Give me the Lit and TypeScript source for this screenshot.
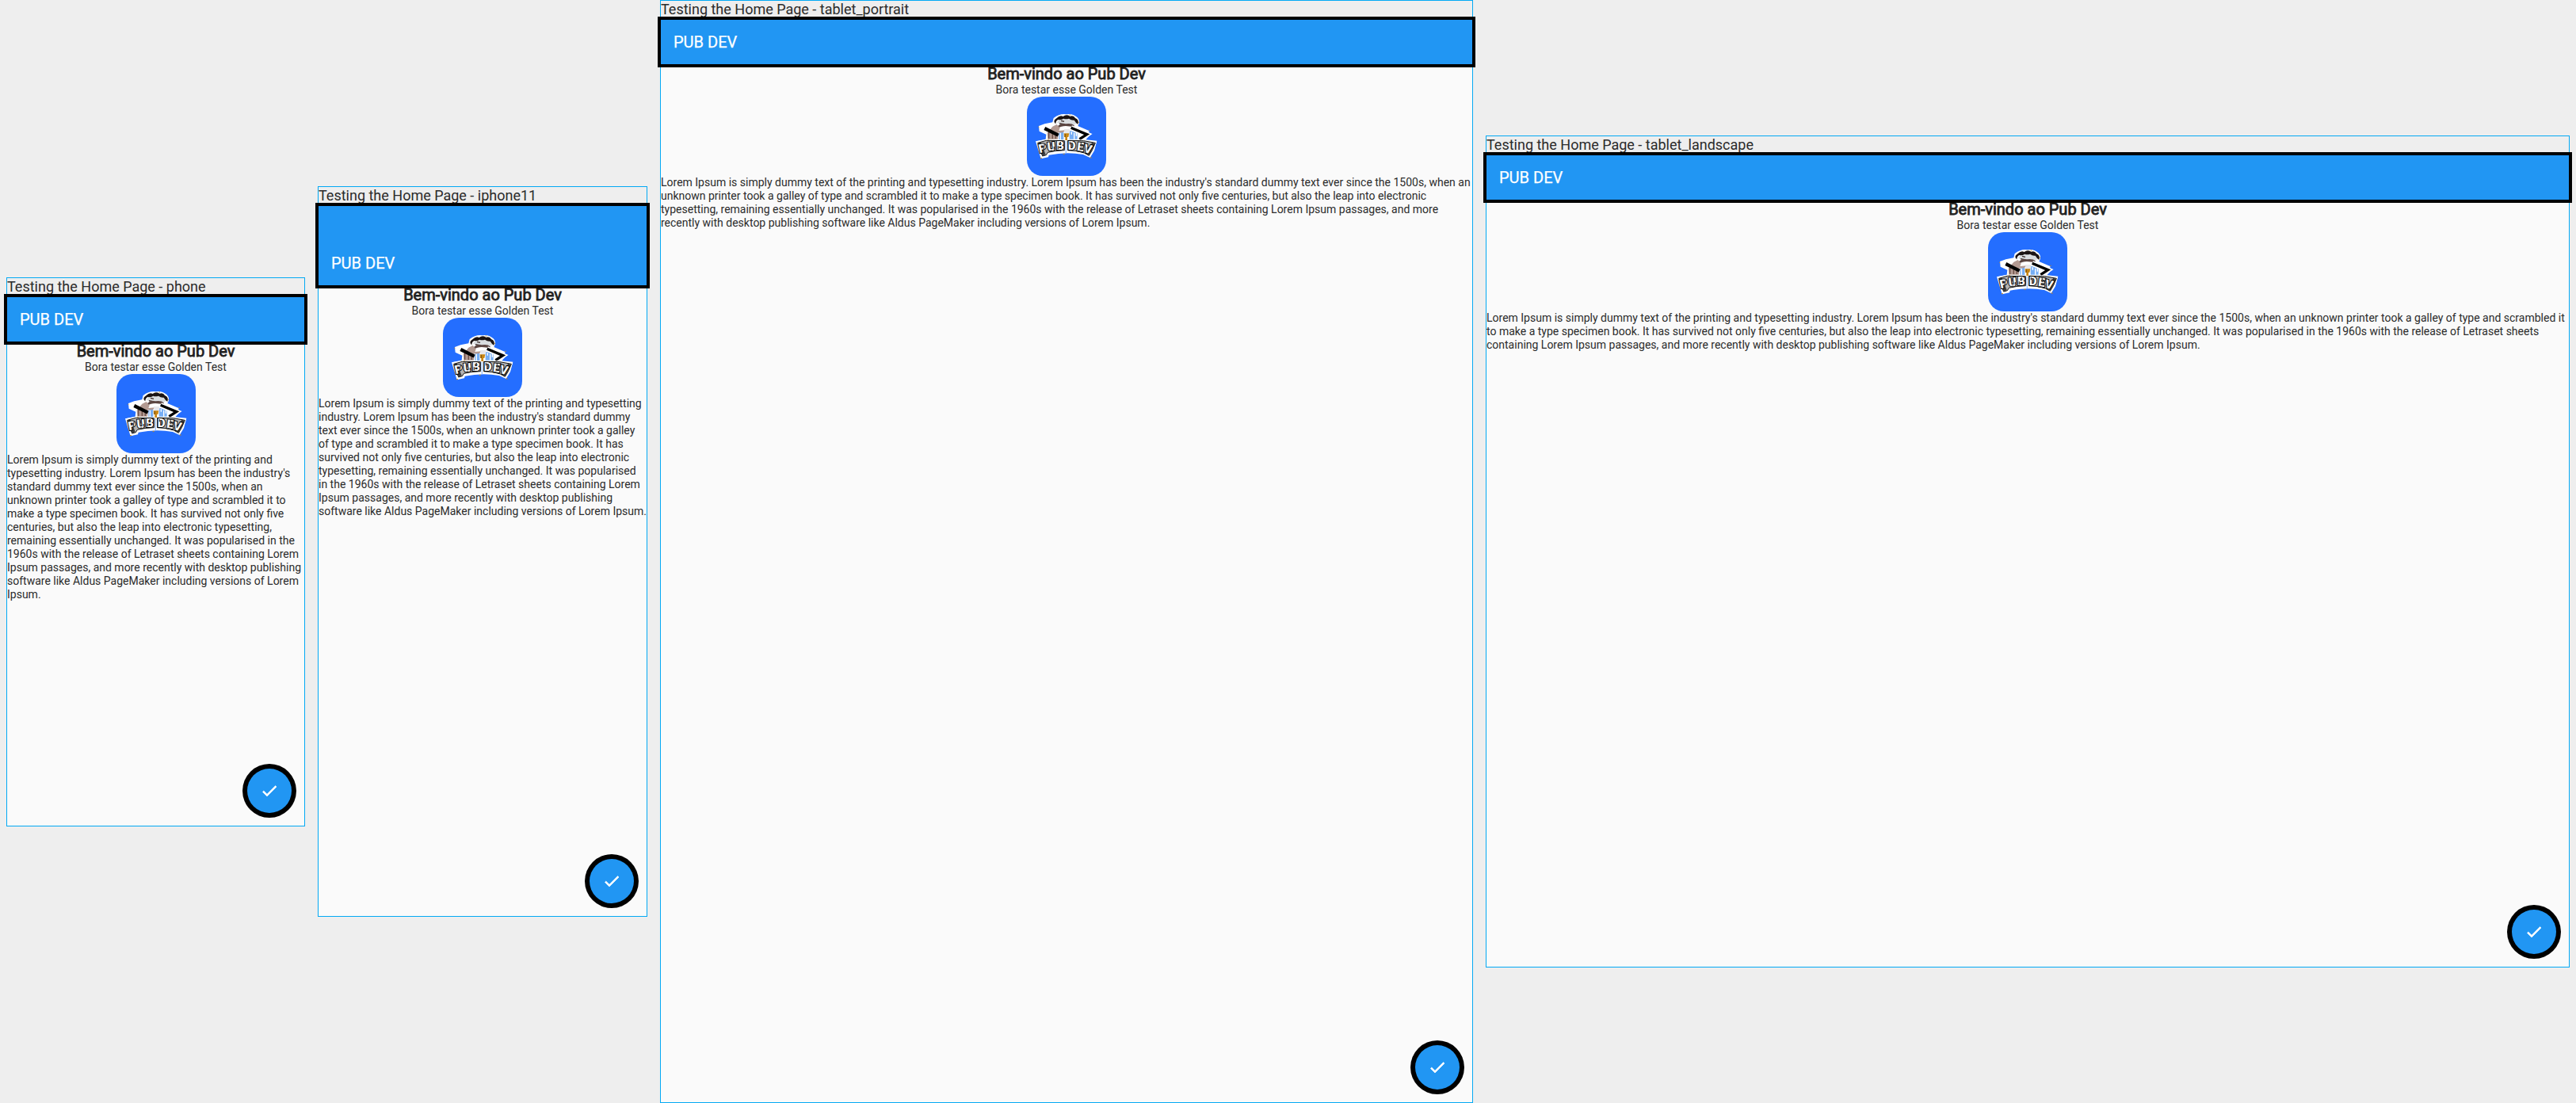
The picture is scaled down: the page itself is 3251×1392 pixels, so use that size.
import { LitElement, html, css } from "lit";
import { customElement, property } from "lit/decorators.js";

const LOREM =
  "Lorem Ipsum is simply dummy text of the printing and typesetting industry. Lorem Ipsum has been the industry's standard dummy text ever since the 1500s, when an unknown printer took a galley of type and scrambled it to make a type specimen book. It has survived not only five centuries, but also the leap into electronic typesetting, remaining essentially unchanged. It was popularised in the 1960s with the release of Letraset sheets containing Lorem Ipsum passages, and more recently with desktop publishing software like Aldus PageMaker including versions of Lorem Ipsum.";

const logo = html`<svg class="logo" viewBox="0 0 100 100">
  <rect width="100" height="100" rx="20" fill="#246eff"/>
  <g transform="translate(7 15) scale(.33333)">
    <path d="M24 66L46 58L76 52L80 36Q104 18 128 22Q152 18 170 34Q180 44 176 58L172 66L214 84V104L202 118L244 122L234 160L218 186L192 174Q130 162 62 176L60 184L32 190L12 124L50 116L52 98L26 86Z" fill="#fff"/>
    <path d="M100 44Q130 30 162 42L172 54L150 66L110 64L92 52Z" fill="#d9dde0"/>
    <path d="M84 54Q78 44 92 36Q104 24 116 30Q128 20 142 29Q156 24 162 36Q178 42 172 60Q164 54 158 44Q148 46 138 38Q126 42 118 38Q108 44 98 42Q88 46 88 58Z" fill="#1b1414"/>
    <path d="M108 46l12 3M102 56l12 2" stroke="#3a2a26" stroke-width="4"/>
    <path d="M96 66Q110 52 126 58Q148 54 158 64V74H148V68L126 66Q108 66 98 74Z" fill="#5b4541"/>
    <path d="M76 68L92 60L104 74L100 84L124 82L112 96L98 90L96 116H58L56 92Z" fill="#b39a92"/>
    <path d="M62 90V114M76 94V114M88 96V114" stroke="#6b4d45" stroke-width="4"/>
    <path d="M100 92L118 90V118H100ZM140 84H170V116H140Z" fill="#76aef5"/>
    <path d="M106 92V118M148 88V98M158 92V116M166 86V104" stroke="#fff" stroke-width="4"/>
    <path d="M120 78h22v12l-8 6h-12z" fill="#e7e7ea"/>
    <path d="M119 94h20l-3 14h-4v12h-8v-12h-4z" fill="#c98613"/>
    <path d="M124 96v12" stroke="#75521c" stroke-width="3"/>
    <path d="M46 75L98 101" stroke="#000" stroke-width="13"/>
    <path d="M146 73L206 98L180 116" fill="none" stroke="#fff" stroke-width="20"/>
    <path d="M146 73L206 98L178 116" fill="none" stroke="#000" stroke-width="10"/>
    <path d="M14 124L56 116L124 120V168Q92 164 62 172L54 182L34 188ZM130 120L196 118L243 126L232 158L218 184L194 172Q164 162 130 166Z" fill="#fff"/>
    <path d="M20 130L52 121L121 122V158Q90 158 58 166L52 176L38 180ZM134 121L194 122L238 130L226 158L214 178L196 168Q166 158 134 158Z" fill="#b4b4b4" stroke="#111" stroke-width="3"/>
    <path d="M20 130L32 128L50 174L38 180ZM238 132L226 128L202 168L214 178Z" fill="#3c3c3c"/>
    <g class="mark">
      <text x="27" y="169" transform="rotate(-12 27 169)">P</text>
      <text x="58" y="161" transform="rotate(-6 58 161)">U</text>
      <text x="90" y="157">B</text>
      <text x="134" y="157">D</text>
      <text x="167" y="160" transform="rotate(7 167 160)">E</text>
      <text x="192" y="165" transform="rotate(13 192 165)">V</text>
    </g>
    <path d="M46 134L42 156M70 130v12M82 144v10M106 126v8M97 142v12M142 126v10M150 134v12M184 130v14M208 146v12M62 162l14-3M172 160l14 3" stroke="#444" stroke-width="4"/>
    <path d="M127 122v46" stroke="#9cc2fb" stroke-width="4"/>
    <path d="M58 118h4M30 188h6M116 172h6M218 186h6M174 52h3M140 24h4M22 70h3M214 82h4" stroke="#c98613" stroke-width="3"/>
  </g>
</svg>`;

@customElement("device-frame")
export class DeviceFrame extends LitElement {
  @property() name = "";
  @property({ type: Number }) w = 375;
  @property({ type: Number }) h = 667;
  @property({ type: Number }) inset = 0;

  static styles = css`
    :host { display: block; flex: none; }
    .frame { border: 1px solid #03a9f4; font-family: Roboto, sans-serif; color: #2b2b2b; }
    .label { height: 24px; line-height: 21px; font-size: 18px; white-space: nowrap; }
    .screen { display: flex; flex-direction: column; background: #fafafa; position: relative; }
    .bar { position: relative; z-index: 1; background: #2196f3; box-shadow: 0 0 0 4px #000; color: #fff; }
    .bar-title { height: 56px; line-height: 56px; padding-left: 16px; font-size: 20px; -webkit-text-stroke: 0.25px #fff; }
    .body { display: flex; flex-direction: column; align-items: center; }
    .title { font-size: 20px; line-height: 24px; color: #222; -webkit-text-stroke: 0.8px #222; }
    .text { font-size: 14px; line-height: 17px; }
    .logo { width: 100px; height: 100px; display: block; }
    .mark { font: 900 46px Roboto, sans-serif; fill: #f6f6f6; stroke: #000; stroke-width: 6px; paint-order: stroke; }
    .para { align-self: stretch; }
    .fab { position: absolute; right: 16px; bottom: 16px; width: 56px; height: 56px; border-radius: 50%;
      background: #2196f3; box-shadow: 0 0 0 6px #000; display: flex; align-items: center; justify-content: center; }
    .check { width: 24px; height: 24px; fill: #fff; stroke: #fff; stroke-width: 0.6px; }
  `;

  render() {
    return html`<div class="frame">
      <div class="label">Testing the Home Page - ${this.name}</div>
      <div class="screen" style="width:${this.w}px;height:${this.h}px">
        <div class="bar" style="padding-top:${this.inset}px"><div class="bar-title">PUB DEV</div></div>
        <div class="body">
          <div class="title">Bem-vindo ao Pub Dev</div>
          <div class="text">Bora testar esse Golden Test</div>
          ${logo}
          <div class="text para">${LOREM}</div>
        </div>
        <div class="fab"><svg class="check" viewBox="0 0 24 24"><path d="M9 16.17L4.83 12l-1.42 1.41L9 19 21 7l-1.41-1.41z"/></svg></div>
      </div>
    </div>`;
  }
}

@customElement("app-root")
export class AppRoot extends LitElement {
  static styles = css`
    :host { display: block; }
    .board { display: flex; align-items: center; gap: 16px; padding: 0 8px; height: 1392px; box-sizing: border-box; background: #eee; }
  `;
  render() {
    return html`<div class="board">
      <device-frame name="phone" w="375" h="667"></device-frame>
      <device-frame name="iphone11" w="414" h="896" inset="44"></device-frame>
      <device-frame name="tablet_portrait" w="1024" h="1366"></device-frame>
      <device-frame name="tablet_landscape" w="1366" h="1024"></device-frame>
    </div>`;
  }
}
